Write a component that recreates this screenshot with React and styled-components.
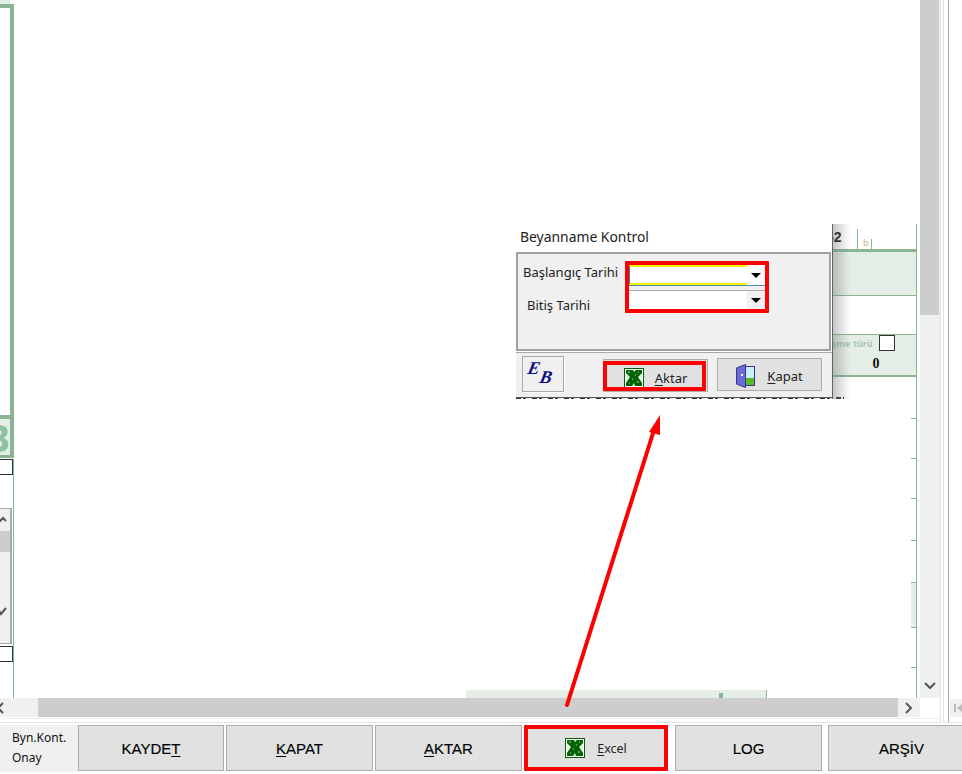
import styled, { createGlobalStyle } from 'styled-components'

const GREEN = '#8ab592'
const PALE = '#e4eee6'
const UI = '"Noto Sans", "DejaVu Sans", sans-serif'

const Global = createGlobalStyle`
  html, body { margin: 0; padding: 0; background: #fff; }
  body { font-family: ${UI}; overflow: hidden; }
`

const Page = styled.div`
  position: relative;
  width: 962px;
  height: 774px;
  background: #fff;
  overflow: hidden;
  display: flex;
  flex-direction: column;
`

const Workspace = styled.div`
  display: flex;
  height: 723px;
  flex: none;
`

const ScrollFrame = styled.div`
  width: 940px;
  flex: none;
  display: flex;
  flex-direction: column;
  border-right: 1px solid #e2e2e2;
  border-bottom: 1px solid #e2e2e2;
  box-sizing: content-box;
  height: 722px;
`

const ViewRow = styled.div`
  display: flex;
  height: 698px;
  flex: none;
`

const Viewport = styled.div`
  width: 920px;
  flex: none;
  display: flex;
`

/* left edge of the sheet */
const LeftStrip = styled.div`
  width: 14px;
  flex: none;
  display: flex;
  flex-direction: column;
`

const TopCell = styled.div`
  height: 4px;
  width: 10px;
  background: ${PALE};
`

const FrameBody = styled.div`
  height: 407px;
  border-top: 4px solid ${GREEN};
  border-right: 4px solid ${GREEN};
  border-bottom: 4px solid ${GREEN};
  flex: none;
`

const LetterCell = styled.div`
  height: 36px;
  background: ${PALE};
  border-right: 4px solid ${GREEN};
  border-bottom: 3px solid ${GREEN};
  overflow: hidden;
  display: flex;
  justify-content: flex-end;
  align-items: center;
  flex: none;
  font: bold 38px ${UI};
  color: #8fc0a8;
`

const LeftRest = styled.div`
  flex: 1;
  border-right: 1px solid ${GREEN};
  display: flex;
  flex-direction: column;
  margin-top: 1px;
`

const MiniBox = styled.div`
  height: 14px;
  width: 12px;
  flex: none;
  margin-top: ${p => p.$top || 0}px;
  background: #fff;
  border: 1px solid #333;
  border-left: 0;
  margin-right: -1px;
`

const MiniScroll = styled.div`
  margin-top: 33px;
  height: 136px;
  width: 12px;
  flex: none;
  box-sizing: border-box;
  background: #f0f0f0;
  border: 1px solid #a9a9a9;
  border-left: 0;
  border-right-width: 2px;
  display: flex;
  flex-direction: column;
  color: #555;
  font-size: 0;
  overflow: hidden;
`

const MiniThumb = styled.div`
  margin-top: 22px;
  height: 21px;
  width: 10px;
  background: #cdcdcd;
`

const Chevron = styled.svg`
  display: block;
  flex: none;
`

const MiniUp = styled(Chevron)`
  position: absolute;
  left: 0;
  top: 515px;
`

const MiniDown = styled(Chevron)`
  position: absolute;
  left: 0;
  top: 606px;
`

const Middle = styled.div`
  width: 818px;
  flex: none;
  display: flex;
  flex-direction: column;
  justify-content: flex-end;
`

const BottomBand = styled.div`
  margin-left: 452px;
  width: 301px;
  height: 8px;
  box-sizing: border-box;
  background: ${PALE};
  border-right: 1px solid ${GREEN};
  display: flex;
  justify-content: flex-end;
  align-items: flex-end;
  padding-right: 43px;
`

const BandMark = styled.div`
  width: 4px;
  height: 5px;
  background: ${GREEN};
`

/* right part of the sheet, its left side sits below the dialog */
const RightSheet = styled.div`
  width: 85px;
  flex: none;
  padding-top: 224px;
  display: flex;
  flex-direction: column;
  box-sizing: border-box;
  border-right: 0;
`

const SheetHead = styled.div`
  height: 25px;
  width: 85px;
  box-sizing: border-box;
  border-right: 1px solid ${GREEN};
  display: flex;
  align-items: flex-end;
  font: bold 14px "Liberation Sans", sans-serif;
  color: #111;
`

const HeadNum = styled.span`
  width: 25px;
  margin-left: -6px;
  padding-right: 6px;
  align-self: flex-start;
  margin-top: 5px;
  line-height: 16px;
  flex: none;
`

const HeadB = styled.span`
  height: 20px;
  width: 14px;
  box-sizing: border-box;
  border-left: 1px solid ${GREEN};
  padding-left: 5px;
  padding-top: 8px;
  font: 9px/12px ${UI};
  color: #c6b77a;
  flex: none;
`

const HeadTick = styled.span`
  height: 10px;
  width: 1px;
  background: ${GREEN};
  flex: none;
`

const SheetBand = styled.div`
  width: 85px;
  box-sizing: border-box;
  height: ${p => p.$h}px;
  background: ${p => (p.$pale ? PALE : '#fff')};
  border-top: ${p => p.$top || 1}px solid ${GREEN};
  border-right: 1px solid ${GREEN};
  flex: none;
`

const TermBand = styled(SheetBand)`
  display: flex;
  flex-direction: column;
  position: relative;
  border-bottom: 2px solid ${GREEN};
  align-items: flex-start;
`

const TermRow = styled.div`
  display: flex;
  align-items: flex-start;
  height: 18px;
`

const TermLabel = styled.span`
  width: 47px;
  font: bold 9px/17px ${UI};
  color: #a9c5b4;
  white-space: nowrap;
  overflow: hidden;
  flex: none;
`

const TermBox = styled.span`
  width: 16px;
  height: 16px;
  box-sizing: border-box;
  background: #fff;
  border: 1px solid #333;
  flex: none;
`

const TermValue = styled.span`
  margin-top: 1px;
  width: 88px;
  text-align: center;
  font: bold 14px/20px "Liberation Serif", serif;
  color: #111;
`

const TickRail = styled.div`
  flex: 1;
  width: 85px;
  box-sizing: border-box;
  border-right: 1px solid ${GREEN};
  display: flex;
  flex-direction: column;
  align-items: flex-end;
`

const Tick = styled.div`
  width: 5px;
  height: ${p => p.$h}px;
  flex: none;
  box-sizing: border-box;
  border-bottom: 1px solid ${GREEN};
  background: ${p => (p.$pale ? PALE : 'transparent')};
`

const VScroll = styled.div`
  width: 20px;
  flex: none;
  background: #f0f0f0;
  display: flex;
  flex-direction: column;
  justify-content: space-between;
  align-items: center;
  padding-bottom: 8px;
  box-sizing: border-box;
`

const VThumb = styled.div`
  width: 19px;
  align-self: flex-start;
  height: 315px;
  background: #cdcdcd;
`

const HScroll = styled.div`
  height: 19px;
  flex: none;
  width: 920px;
  display: flex;
  align-items: center;
  background: #f0f0f0;
`

const HThumb = styled.div`
  margin-left: 38px;
  width: 860px;
  height: 19px;
  background: #cdcdcd;
`

const HGap = styled.div`
  flex: 1;
  display: flex;
  justify-content: center;
`

const LeftNub = styled(Chevron)`
  position: absolute;
  left: 0;
  top: 702px;
`

const FrameGap = styled.div`
  height: 1px;
  margin-top: 1px;
  width: 940px;
  background: #eeeeee;
  flex: none;
`

const OuterChrome = styled.div`
  flex: 1;
  margin-left: 2px;
  border-left: 1px solid #e2e2e2;
  border-bottom: 1px solid #e2e2e2;
  padding-left: 4px;
  display: flex;
  flex-direction: column;
  justify-content: flex-end;
`

const OuterLine = styled.div`
  flex: 1;
  border-left: 1px solid #a8a8a8;
  display: flex;
  flex-direction: column;
  justify-content: flex-end;
  padding-left: 1px;
`

const SkipBox = styled.div`
  height: 18px;
  margin-bottom: 5px;
  background: #f0f0f0;
  display: flex;
  align-items: center;
  padding-left: 4px;
`

/* bottom toolbar */
const Toolbar = styled.div`
  height: 47px;
  margin-top: 2px;
  flex: none;
  display: flex;
`

const ApproveCell = styled.div`
  width: 78px;
  flex: none;
  box-sizing: border-box;
  background: #f0f0f0;
  padding: 3px 0 0 12px;
  font: 12px/20px ${UI};
  color: #111;
`

const ToolButton = styled.div`
  width: ${p => p.$w}px;
  margin-right: ${p => p.$gap || 0}px;
  flex: none;
  box-sizing: border-box;
  height: 46px;
  background: #e1e1e1;
  border: 1px solid #adadad;
  display: flex;
  align-items: center;
  justify-content: center;
  gap: 12px;
  color: #000;
  font: 15px "Liberation Sans", sans-serif;
  white-space: nowrap;
  -webkit-text-stroke: 0.15px #000;
`

const ExcelLabel = styled.span`
  font: 12.5px ${UI};
  -webkit-text-stroke: 0;
  color: #222;
`

const Under = styled.span`
  text-decoration: underline;
  text-underline-offset: 2px;
`

/* floating dialog */
const Dialog = styled.div`
  position: absolute;
  left: 516px;
  top: 224px;
  width: 317px;
  height: 175px;
  box-sizing: border-box;
  background: #fff;
  border-right: 1px solid #555;
  display: flex;
  flex-direction: column;
  &::after {
    content: '';
    position: absolute;
    left: 316px;
    top: 0;
    width: 18px;
    height: 175px;
    background: linear-gradient(to right, rgba(120,120,120,.45), rgba(255,255,255,0));
  }
  &::before {
    content: '';
    position: absolute;
    left: 0;
    bottom: 0;
    width: 328px;
    height: 2px;
    background:
      linear-gradient(#555, #555) top left / 316px 1px no-repeat,
      repeating-linear-gradient(to right, #333 0 5px, transparent 5px 7px, #333 7px 10px, transparent 10px 16px);
  }
`

const DialogTitle = styled.div`
  height: 28px;
  flex: none;
  padding-left: 4px;
  font: 13.9px/26px ${UI};
  color: #222;
`

const DialogBody = styled.div`
  height: 99px;
  width: 315px;
  flex: none;
  box-sizing: border-box;
  background: #f0f0f0;
  border: 2px solid #a0a0a0;
  border-bottom-width: 2px;
  padding: 11px 0 0 0;
  display: flex;
  flex-direction: column;
`

const FieldRow = styled.div`
  display: flex;
  align-items: center;
  height: 20px;
  margin-bottom: ${p => p.$gap || 0}px;
`

const FieldLabel = styled.label`
  width: 111px;
  flex: none;
  box-sizing: border-box;
  padding-left: ${p => p.$pad}px;
  margin-top: ${p => p.$down || 0}px;
  margin-bottom: ${p => p.$up || 0}px;
  font: 13px ${UI};
  color: #222;
  white-space: nowrap;
`

const Combo = styled.div`
  width: 136px;
  height: 20px;
  flex: none;
  box-sizing: border-box;
  background: #fff;
  display: flex;
  justify-content: flex-end;
  border-top: ${p => (p.$active ? '2px solid #f6f600' : '1px solid #aaa')};
  border-bottom: ${p => (p.$active ? '2px solid #f6f600' : '0')};
  border-left: ${p => (p.$active ? '1px solid #2b7bb8' : '0')};
  box-shadow: ${p => (p.$active ? '0 1px 0 #4a90a8' : 'none')};
`

const ComboDrop = styled.div`
  width: 18px;
  flex: none;
  margin: ${p => (p.$active ? '-2px 0' : '0')};
  background: ${p => (p.$active ? '#fff' : '#f0f0f0')};
  display: flex;
  align-items: center;
  justify-content: center;
  &::after {
    content: '';
    border-left: 5px solid transparent;
    border-right: 5px solid transparent;
    border-top: 5px solid #000;
  }
`

const DialogFoot = styled.div`
  margin-top: 1px;
  flex: 1;
  width: 316px;
  border-top: 1px solid #a9a9a9;
  background: #f0f0f0;
  display: flex;
  align-items: flex-start;
  padding: 3px 0 0 6px;
  box-sizing: border-box;
`

const LogoButton = styled.div`
  width: 42px;
  height: 36px;
  box-sizing: border-box;
  border: 1px solid #a9a9a9;
  box-shadow: 1px 1px 0 #fff;
  display: flex;
  align-items: flex-start;
  padding: 1px 0 0 5px;
  margin-right: 39px;
  flex: none;
  color: #0a0a8a;
  font: italic bold 18px "Liberation Serif", serif;
`

const LogoLetter = styled.span`
  display: block;
  line-height: 20px;
  margin-top: ${p => p.$top}px;
  transform: skewX(-12deg);
`

const DialogButton = styled.div`
  width: ${p => p.$w}px;
  height: ${p => p.$h}px;
  margin-top: ${p => p.$top}px;
  margin-right: ${p => p.$gap || 0}px;
  padding-top: ${p => p.$pad}px;
  flex: none;
  box-sizing: border-box;
  background: #e1e1e1;
  border: 1px solid #adadad;
  display: flex;
  align-items: center;
  justify-content: center;
  gap: 11px;
  font: 13px ${UI};
  color: #222;
`

/* red annotations of the screenshot */
const RedMark = styled.div`
  position: absolute;
  left: ${p => p.$x}px;
  top: ${p => p.$y}px;
  width: ${p => p.$w}px;
  height: ${p => p.$h}px;
  box-sizing: border-box;
  border: 4px solid #fe0000;
  border-radius: 1px;
  pointer-events: none;
`

const ArrowLayer = styled.svg`
  position: absolute;
  left: 0;
  top: 0;
  pointer-events: none;
`

const ChevronIcon = ({ d, w = 10, h = 8, as: As = Chevron, color = '#555' }) => (
  <As width={w} height={h} viewBox={`0 0 ${w} ${h}`}>
    <path d={d} fill="none" stroke={color} strokeWidth="2" />
  </As>
)

const ExcelIcon = () => (
  <svg width="20" height="20" viewBox="0 0 20 20">
    <rect x="0.5" y="0.5" width="19" height="19" fill="#fff" stroke="#006400" />
    <rect x="2" y="2" width="16" height="16" fill="#e6f0e6" />
    <path d="M2 2h7l1 2 2-2h6v3l-4 4 4 6v3h-7l-1-3-2 3H2v-3l4-6-4-4z" fill="#006400" />
    <path d="M4 4h2M11 7h1M8 11h1M13 14h2M5 15h1M14 4h1" stroke="#bcd8bc" strokeWidth="1" />
  </svg>
)

const DoorIcon = () => (
  <svg width="20" height="24" viewBox="0 0 20 24">
    <rect x="6.5" y="2.5" width="12" height="19" fill="#c8f0f8" stroke="#35358f" />
    <rect x="10" y="14" width="8" height="7" fill="#58b828" />
    <path d="M0.5 4 L9.5 0.5 V23.5 L0.5 20 Z" fill="#6a6ad8" stroke="#35358f" />
    <rect x="5" y="10" width="2" height="2" fill="#fff" />
  </svg>
)

const ticks = [
  { h: 42 }, { h: 40 }, { h: 40 }, { h: 42 }, { h: 42 },
  { h: 45, pale: true }, { h: 40 },
]

export default function App() {
  return (
    <Page>
      <Global />
      <Workspace>
        <ScrollFrame>
          <ViewRow>
            <Viewport>
              <LeftStrip>
                <TopCell />
                <FrameBody />
                <LetterCell>B</LetterCell>
                <LeftRest>
                  <MiniBox />
                  <MiniScroll>
                    <MiniThumb />
                  </MiniScroll>
                  <MiniBox $top={2} />
                </LeftRest>
              </LeftStrip>
              <Middle>
                <BottomBand>
                  <BandMark />
                </BottomBand>
              </Middle>
              <RightSheet>
                <SheetHead>
                  <HeadNum>52</HeadNum>
                  <HeadB>b</HeadB>
                  <HeadTick />
                </SheetHead>
                <SheetBand $h={46} $pale $top={3} />
                <SheetBand $h={39} />
                <TermBand $h={43} $pale>
                  <TermRow>
                    <TermLabel>şme türü</TermLabel>
                    <TermBox />
                  </TermRow>
                  <TermValue>0</TermValue>
                </TermBand>
                <TickRail>
                  {ticks.map((t, i) => (
                    <Tick key={i} $h={t.h} $pale={t.pale} />
                  ))}
                </TickRail>
              </RightSheet>
            </Viewport>
            <VScroll>
              <VThumb />
              <ChevronIcon d="M1 2 L6 7 L11 2" w={12} h={9} />
            </VScroll>
          </ViewRow>
          <HScroll>
            <HThumb />
            <HGap>
              <ChevronIcon d="M1 1 L6 6 L1 11" w={8} h={12} />
            </HGap>
          </HScroll>
          <FrameGap />
        </ScrollFrame>
        <OuterChrome>
          <OuterLine>
            <SkipBox>
              <svg width="8" height="8" viewBox="0 0 8 8">
                <path d="M0 0h2v8H0zM8 0v8L3 4z" fill="#bdbdbd" />
              </svg>
            </SkipBox>
          </OuterLine>
        </OuterChrome>
      </Workspace>

      <Toolbar>
        <ApproveCell>
          Byn.Kont.
          <br />
          Onay
        </ApproveCell>
        <ToolButton $w={146} $gap={2}>
          <span>
            KAYDE<Under>T</Under>
          </span>
        </ToolButton>
        <ToolButton $w={147} $gap={2}>
          <span>
            <Under>K</Under>APAT
          </span>
        </ToolButton>
        <ToolButton $w={147} $gap={2}>
          <span>
            <Under>A</Under>KTAR
          </span>
        </ToolButton>
        <ToolButton $w={144} $gap={7}>
          <ExcelIcon />
          <ExcelLabel>
            <Under>E</Under>xcel
          </ExcelLabel>
        </ToolButton>
        <ToolButton $w={147} $gap={6}>
          LOG
        </ToolButton>
        <ToolButton $w={147}>ARŞİV</ToolButton>
      </Toolbar>

      <ChevronIcon as={MiniUp} d="M-2 8 L3 3 L6 6" w={8} h={9} />
      <ChevronIcon as={MiniDown} d="M-2 3 L1 8 L6 2" w={8} h={10} />
      <ChevronIcon as={LeftNub} d="M3 1 L-2 6 L3 11" w={4} h={12} />

      <Dialog>
        <DialogTitle>Beyanname Kontrol</DialogTitle>
        <DialogBody>
          <FieldRow $gap={5}>
            <FieldLabel $pad={5} $up={6}>Başlangıç Tarihi</FieldLabel>
            <Combo $active>
              <ComboDrop $active />
            </Combo>
          </FieldRow>
          <FieldRow>
            <FieldLabel $pad={9} $down={10}>Bitiş Tarihi</FieldLabel>
            <Combo>
              <ComboDrop />
            </Combo>
          </FieldRow>
        </DialogBody>
        <DialogFoot>
          <LogoButton>
            <LogoLetter $top={0}>E</LogoLetter>
            <LogoLetter $top={9}>B</LogoLetter>
          </LogoButton>
          <DialogButton $w={105} $h={33} $top={3} $gap={9} $pad={4}>
            <ExcelIcon />
            <span>
              <Under>A</Under>ktar
            </span>
          </DialogButton>
          <DialogButton $w={105} $h={33} $top={2} $pad={3}>
            <DoorIcon />
            <span>
              <Under>K</Under>apat
            </span>
          </DialogButton>
        </DialogFoot>
      </Dialog>

      <RedMark $x={625} $y={261} $w={144} $h={52} />
      <RedMark $x={603} $y={361} $w={103} $h={30} />
      <RedMark $x={524} $y={725} $w={144} $h={46} />

      <ArrowLayer width="962" height="774" viewBox="0 0 962 774">
        <path d="M567 705 L654 430" stroke="#fe0000" strokeWidth="4" strokeLinecap="round" fill="none" />
        <path d="M660 415 L649 432 L660 435 Z" fill="#fe0000" />
      </ArrowLayer>
    </Page>
  )
}
